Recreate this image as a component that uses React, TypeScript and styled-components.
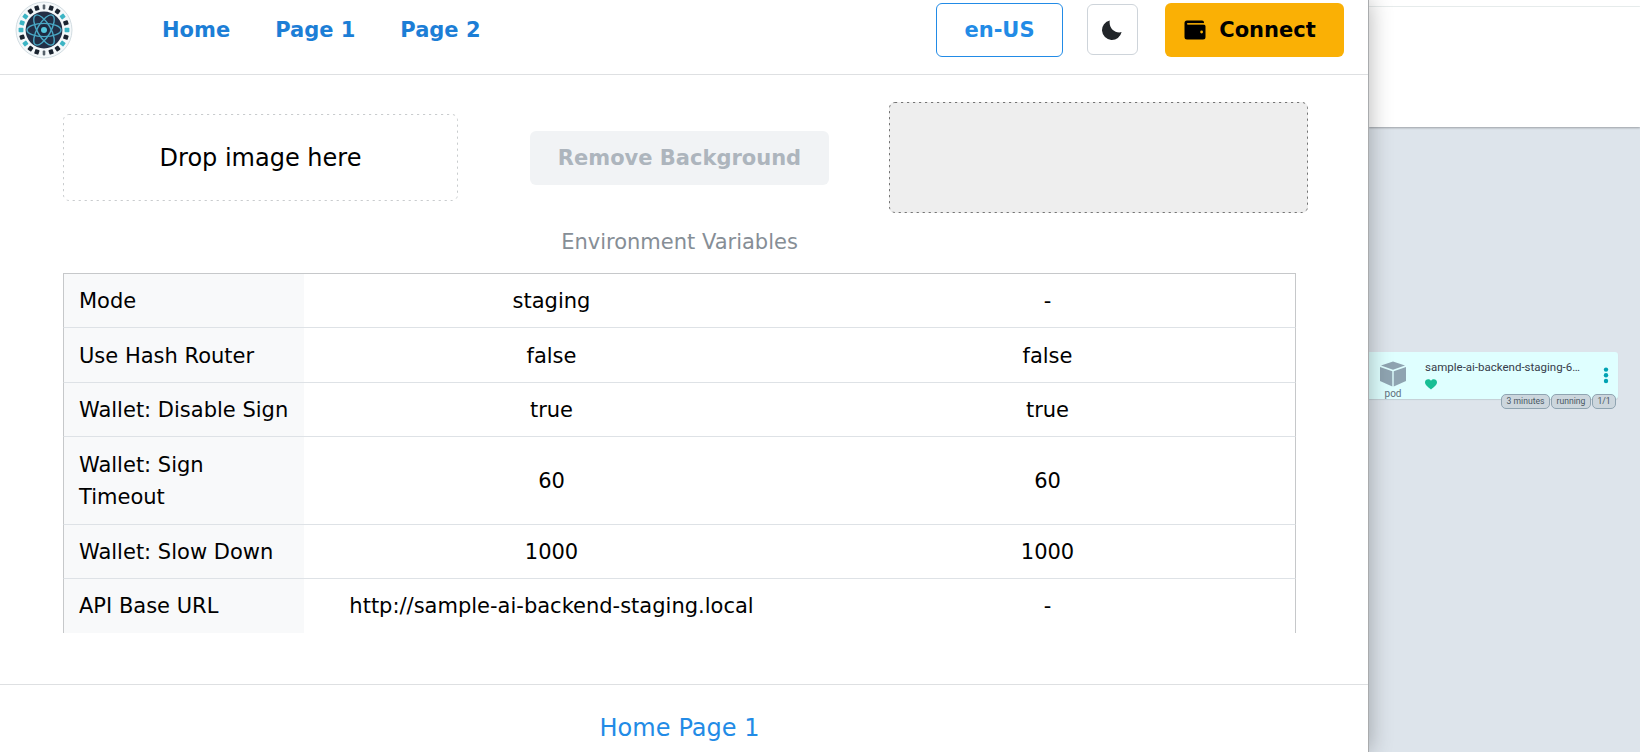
import React from "react";
import styled, { createGlobalStyle, css } from "styled-components";

const GlobalStyle = createGlobalStyle`
  * { box-sizing: border-box; }
  html, body, #root { height: 100%; }
  body {
    margin: 0;
    overflow: hidden;
    font-family: "DejaVu Sans", sans-serif;
    font-size: 21px;
    color: #000;
  }
  button { font-family: inherit; }
  svg { flex: none; }
`;

const Screen = styled.div`
  display: flex;
  width: 1640px;
  height: 752px;
  overflow: hidden;
`;

const AppWindow = styled.div`
  display: flex;
  flex-direction: column;
  flex: none;
  width: 1369px;
  height: 752px;
  background: #fff;
  border-right: 1px solid #a9abad;
  box-shadow: 0 0 22px rgba(0, 0, 0, 0.3);
  z-index: 1;
`;

const Header = styled.header`
  display: flex;
  align-items: center;
  height: 75px;
  padding: 0 24px 15px 15px;
  border-bottom: 1px solid #dee0e2;
`;

const Nav = styled.nav`
  display: flex;
  gap: 45px;
  margin-left: 89px;
  flex: 1;
`;

const NavLink = styled.a`
  color: #1c7ed6;
  font-weight: 700;
  line-height: 32px;
`;

const buttonBase = css`
  display: flex;
  align-items: center;
  justify-content: center;
  height: 54px;
  padding: 0;
  border: 0;
  border-radius: 6px;
  font-size: 21px;
  font-weight: 700;
`;

const LocaleButton = styled.button`
  ${buttonBase}
  width: 127px;
  border: 1px solid #228be6;
  background: #fff;
  color: #228be6;
`;

const ThemeButton = styled.button`
  ${buttonBase}
  width: 51px;
  height: 51px;
  padding-right: 1px;
  margin: 0 27px 0 24px;
  border: 1px solid #ced4da;
  background: #fff;
`;

const ConnectButton = styled.button`
  ${buttonBase}
  width: 179px;
  padding-right: 9px;
  gap: 13px;
  background: #fab005;
  color: #000;
`;

const Tools = styled.section`
  display: flex;
  align-items: center;
  height: 111px;
  margin: 27px 60px 0 63px;
`;

const DropZone = styled.div`
  position: relative;
  display: flex;
  align-items: center;
  justify-content: center;
  width: 395px;
  height: 87px;
  border-radius: 6px;
  font-size: 24px;
`;

const RemoveButton = styled.button`
  ${buttonBase}
  width: 299px;
  margin: 0 60px 0 72px;
  background: #f1f3f5;
  color: #adb5bd;
`;

const Preview = styled.div`
  position: relative;
  width: 419px;
  height: 111px;
  border-radius: 6px;
  background: #eee;
`;

const Outline = styled.svg`
  position: absolute;
  inset: 0;
`;

const EnvTable = styled.table`
  width: 1233px;
  margin: 12px 0 0 63px;
  border-collapse: separate;
  border-spacing: 0;
  table-layout: fixed;
  line-height: 32px;
`;

const Caption = styled.caption`
  height: 48px;
  padding-top: 1px;
  color: #868e96;
`;

const Body = styled.tbody`
  tr:first-child > * { border-top: 1px solid #c6c8ca; }
  tr:last-child > * { border-bottom: 0; }
  tr:nth-child(2) > * { padding-top: 1px; }
`;

const Row = styled.tr<{ $height: number }>`
  height: ${(p) => p.$height}px;
`;

const Label = styled.th`
  width: 241px;
  padding: 0 15px;
  background: #f8f9fa;
  border-left: 1px solid #c6c8ca;
  border-bottom: 1px solid #dee2e6;
  font-weight: 400;
  text-align: left;
`;

const Value = styled.td`
  padding: 0 1px 0 0;
  border-bottom: 1px solid #dee2e6;
  text-align: center;
  &:last-child {
    padding-right: 0;
    border-right: 1px solid #c6c8ca;
  }
`;

const Footer = styled.footer`
  display: flex;
  justify-content: center;
  align-items: center;
  gap: 8px;
  height: 68px;
  margin-top: auto;
  padding: 18px 9px 0 0;
  border-top: 1px solid #dee0e2;
  font-size: 24px;
`;

const FooterLink = styled.a`
  color: #228be6;
`;

const Backdrop = styled.div`
  display: flex;
  flex-direction: column;
  flex: 1;
  background: #dde4eb;
  font-family: Roboto, sans-serif;
`;

const BackdropBar = styled.div`
  height: 7px;
  background: #fff;
  border-bottom: 1px solid #ebf0f0;
`;

const BackdropHeader = styled.div`
  height: 120px;
  background: #fff;
  box-shadow: 0 1px 2px rgba(0, 0, 0, 0.3);
`;

const PodCard = styled.div`
  position: relative;
  display: flex;
  width: 249px;
  height: 47px;
  margin-top: 225px;
  border-radius: 0 3px 3px 0;
  background: #dfffff;
  box-shadow: 0 1px 1px #c4cfd5;
`;

const PodKind = styled.div`
  display: flex;
  flex-direction: column;
  align-items: center;
  width: 48px;
  padding-top: 9px;
  color: #5f6f7c;
  font-size: 10px;
  line-height: 14px;
`;

const PodInfo = styled.div`
  flex: 1;
  padding: 7px 0 0 8px;
  color: #363c4a;
  font-size: 11.5px;
  line-height: 16px;
`;

const PodName = styled.div`
  white-space: nowrap;
`;

const HeartIcon = styled.svg`
  display: block;
  margin-top: 4px;
`;

const Menu = styled.svg`
  margin: 15px 9px 0 0;
`;

const Badges = styled.div`
  position: absolute;
  top: 42px;
  right: 2px;
  display: flex;
  gap: 1px;
`;

const Badge = styled.span<{ $width: number }>`
  width: ${(p) => p.$width}px;
  height: 15px;
  border: 1px solid #8fa4b1;
  border-radius: 5px;
  background: #ccd6dd;
  color: #495763;
  font-size: 8.6px;
  line-height: 13px;
  text-align: center;
  white-space: nowrap;
`;

const rows: { label: string; values: string[]; height: number }[] = [
  { label: "Mode", values: ["staging", "-"], height: 55 },
  { label: "Use Hash Router", values: ["false", "false"], height: 55 },
  { label: "Wallet: Disable Sign", values: ["true", "true"], height: 54 },
  { label: "Wallet: Sign Timeout", values: ["60", "60"], height: 88 },
  { label: "Wallet: Slow Down", values: ["1000", "1000"], height: 54 },
  { label: "API Base URL", values: ["http://sample-ai-backend-staging.local", "-"], height: 54 },
];

const ringTiles = Array.from({ length: 20 }, (_, i) => i);
const tealTiles = new Set([3, 5, 7, 13, 15, 16, 17]);
const narrowTiles = new Set([0, 10]);

function Logo() {
  return (
    <svg width="58" height="58" viewBox="-29 -29 58 58">
      <circle r="28" fill="#f4f8fa" stroke="#d3dde2" strokeWidth="1" />
      {ringTiles.map((i) => (
        <rect
          key={i}
          x={narrowTiles.has(i) ? -1.3 : -2.2}
          y="-25.4"
          width={narrowTiles.has(i) ? 2.6 : 4.4}
          height="4.8"
          rx="0.8"
          fill={tealTiles.has(i) ? "#3bb4c4" : narrowTiles.has(i) ? "#56616b" : "#1b2430"}
          transform={`rotate(${i * 18})`}
        />
      ))}
      <circle r="18.4" fill="#222f46" />
      <g fill="none" stroke="#4aa9c6" strokeWidth="1.4">
        <ellipse rx="17" ry="6.600" />
        <ellipse rx="17" ry="6.600" transform="rotate(60)" />
        <ellipse rx="17" ry="6.600" transform="rotate(120)" />
      </g>
      <circle r="5" fill="#1c2940" />
      <circle r="3" fill="#55c6dc" />
    </svg>
  );
}

function DashedOutline({ width, height, color }: { width: number; height: number; color: string }) {
  return (
    <Outline width={width} height={height}>
      <rect
        x="0.5"
        y="0.5"
        width={width - 1}
        height={height - 1}
        rx="5.5"
        fill="none"
        stroke={color}
        strokeDasharray="2.2 3.8"
      />
    </Outline>
  );
}

export default function App() {
  return (
    <Screen>
      <GlobalStyle />
      <AppWindow>
        <Header>
          <Logo />
          <Nav>
            <NavLink>Home</NavLink>
            <NavLink>Page 1</NavLink>
            <NavLink>Page 2</NavLink>
          </Nav>
          <LocaleButton>en-US</LocaleButton>
          <ThemeButton>
            <svg width="20" height="20" viewBox="0 0 20 20">
              <path d="M7.800 .4A9.900 9.900 0 1 0 19.600 12.100C13.500 14 6.300 8 7.800 .4Z" fill="#212529" />
            </svg>
          </ThemeButton>
          <ConnectButton>
            <svg width="22" height="20" viewBox="0 0 22 20">
              <path
                d="M3 .5H18Q20 .5 20 2.500V3.200H4Q3 3.200 3 3.800T4 4.400H19.500Q21.500 4.400 21.500 6.300V17Q21.500 19.500 19 19.500H3Q.5 19.500 .5 17V3Q.5 .5 3 .5Z"
                fill="#000"
              />
              <path d="M3.200 3.800H20" stroke="#fab005" strokeWidth="1" />
              <circle cx="17.600" cy="12" r="1.400" fill="#fab005" />
            </svg>
            Connect
          </ConnectButton>
        </Header>
        <Tools>
          <DropZone>
            <DashedOutline width={395} height={87} color="#c9ccce" />
            Drop image here
          </DropZone>
          <RemoveButton disabled>Remove Background</RemoveButton>
          <Preview>
            <DashedOutline width={419} height={111} color="#747474" />
          </Preview>
        </Tools>
        <EnvTable>
          <Caption>Environment Variables</Caption>
          <Body>
            {rows.map((row) => (
              <Row key={row.label} $height={row.height}>
                <Label>{row.label}</Label>
                {row.values.map((value, i) => (
                  <Value key={i}>{value}</Value>
                ))}
              </Row>
            ))}
          </Body>
        </EnvTable>
        <Footer>
          <FooterLink>Home</FooterLink>
          <FooterLink>Page 1</FooterLink>
        </Footer>
      </AppWindow>
      <Backdrop>
        <BackdropBar />
        <BackdropHeader />
        <PodCard>
          <PodKind>
            <svg width="26" height="26" viewBox="0 0 26 26" fill="#8fa4b1">
              <path d="M13 .5 25 4.500 13 8.800 1 4.500Z" />
              <path d="M0 6 12.300 10.300V25.500L0 20Z" />
              <path d="M26 6 13.700 10.300V25.500L26 20Z" />
            </svg>
            pod
          </PodKind>
          <PodInfo>
            <PodName>sample-ai-backend-staging-6…</PodName>
            <HeartIcon width="12" height="11" viewBox="0 0 12 11">
              <path d="M6 10.600C3 8 0 6 0 3.300C0 .3 4-.8 6 1.800C8-.8 12 .3 12 3.300C12 6 9 8 6 10.600Z" fill="#18be94" />
            </HeartIcon>
          </PodInfo>
          <Menu width="6" height="18" viewBox="0 0 6 18" fill="#00a2b3">
            <circle cx="3" cy="2.600" r="2.200" />
            <circle cx="3" cy="8.300" r="2.200" />
            <circle cx="3" cy="14" r="2.200" />
          </Menu>
          <Badges>
            <Badge $width={49}>3 minutes</Badge>
            <Badge $width={40}>running</Badge>
            <Badge $width={24}>1/1</Badge>
          </Badges>
        </PodCard>
      </Backdrop>
    </Screen>
  );
}
